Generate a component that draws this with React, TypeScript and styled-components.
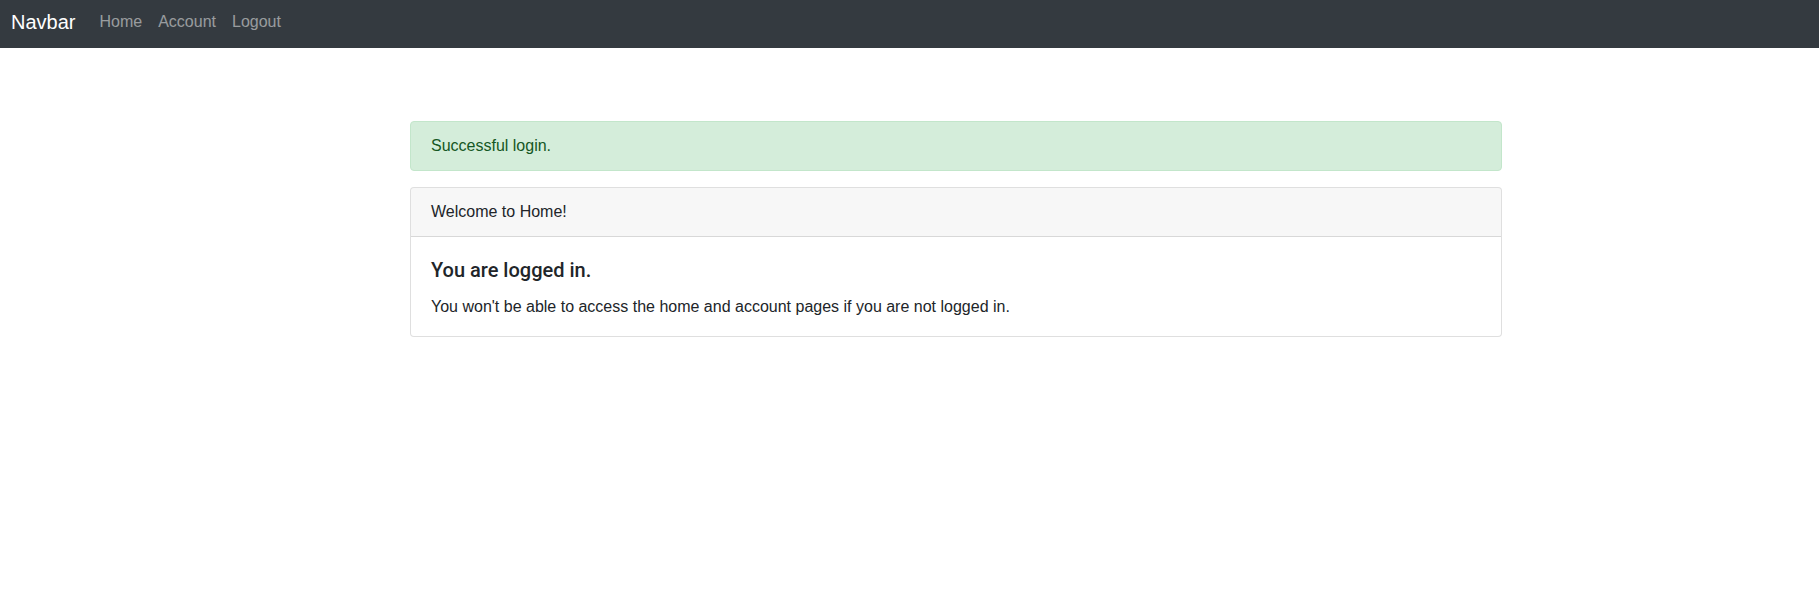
import React from "react";
import styled, { createGlobalStyle } from "styled-components";

const GlobalStyle = createGlobalStyle`
  *, *::before, *::after { box-sizing: border-box; }
  html, body { margin: 0; padding: 0; background: #fff; }
  body {
    font-family: "Liberation Sans", Arial, sans-serif;
    font-size: 16px;
    line-height: 24px;
    color: #212529;
  }
`;

const Navbar = styled.nav`
  display: flex;
  align-items: flex-start;
  height: 48px;
  padding: 7px 11px 0;
  background: #343a40;
`;

const Brand = styled.a`
  font-size: 20px;
  line-height: 30px;
  color: #fff;
  text-decoration: none;
  margin-right: 16px;
  white-space: nowrap;
`;

const NavList = styled.ul`
  display: flex;
  list-style: none;
  margin: 0;
  padding: 3px 0 0;
`;

const NavLink = styled.a`
  display: block;
  padding: 0 8px;
  font-size: 16px;
  line-height: 24px;
  color: rgba(255, 255, 255, 0.5);
  text-decoration: none;
`;

const Main = styled.main`
  width: 1092px;
  margin: 73px 0 0 410px;
`;

const Alert = styled.div`
  padding: 12px 20px;
  margin-bottom: 16px;
  border: 1px solid #c3e6cb;
  border-radius: 4px;
  background: #d4edda;
  color: #155724;
`;

const Card = styled.div`
  border: 1px solid rgba(0, 0, 0, 0.125);
  border-radius: 4px;
  background: #fff;
  overflow: hidden;
`;

const CardHeader = styled.div`
  padding: 12px 20px;
  background: rgba(0, 0, 0, 0.03);
  border-bottom: 1px solid rgba(0, 0, 0, 0.125);
`;

const CardBody = styled.div`
  padding: 21px 20px 17px;
`;

const CardTitle = styled.h5`
  margin: 0 0 13px;
  font-family: Roboto, "Liberation Sans", sans-serif;
  font-size: 20px;
  font-weight: 500;
  line-height: 24px;
`;

const CardText = styled.p`
  margin: 0;
`;

export default function App() {
  return (
    <>
      <GlobalStyle />
      <Navbar>
        <Brand href="#">Navbar</Brand>
        <NavList>
          <li><NavLink href="#">Home</NavLink></li>
          <li><NavLink href="#">Account</NavLink></li>
          <li><NavLink href="#">Logout</NavLink></li>
        </NavList>
      </Navbar>
      <Main>
        <Alert>Successful login.</Alert>
        <Card>
          <CardHeader>Welcome to Home!</CardHeader>
          <CardBody>
            <CardTitle>You are logged in.</CardTitle>
            <CardText>
              You won't be able to access the home and account pages if you are not logged in.
            </CardText>
          </CardBody>
        </Card>
      </Main>
    </>
  );
}
